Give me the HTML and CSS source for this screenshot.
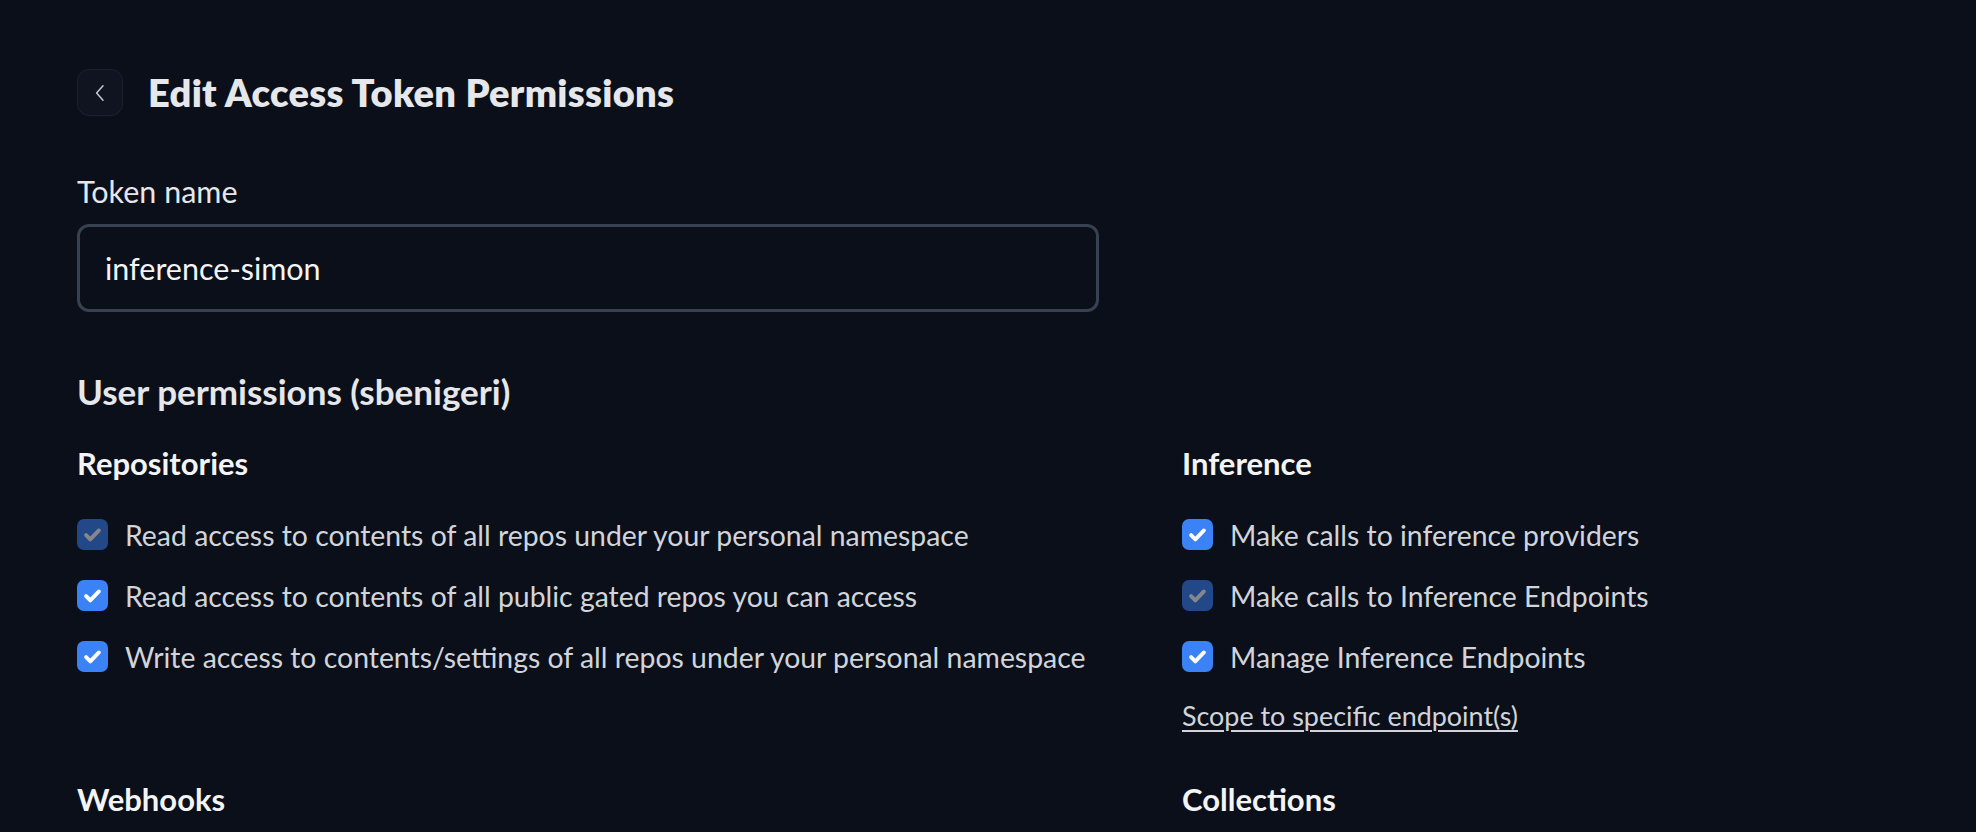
FILE: index.html
```html
<!DOCTYPE html>
<html lang="en">
<head>
<meta charset="utf-8">
<title>Edit Access Token Permissions</title>
<link rel="stylesheet" href="styles.css">
</head>
<body>
<main class="page">
  <header class="header">
    <a class="back" href="#" aria-label="Back">
      <svg width="12" height="18" viewBox="0 0 12 18" fill="none"><path d="M9 1.8L2.6 9l6.4 7.2" stroke="#c4c8d0" stroke-width="1.5" stroke-linecap="round" stroke-linejoin="round"/></svg>
    </a>
    <h1 class="title">Edit Access Token Permissions</h1>
  </header>

  <label class="label" for="tok">Token name</label>
  <div class="input">inference-simon</div>

  <h2 class="subtitle">User permissions (sbenigeri)</h2>

  <div class="grid">
    <section class="section">
      <h3 class="heading">Repositories</h3>
      <div class="list">
        <div class="row"><span class="box disabled"><svg viewBox="0 0 16 16"><path d="M4.2 8.4l2.5 2.5L11.8 5.6"/></svg></span><span class="text">Read access to contents of all repos under your personal namespace</span></div>
        <div class="row"><span class="box"><svg viewBox="0 0 16 16"><path d="M4.2 8.4l2.5 2.5L11.8 5.6"/></svg></span><span class="text">Read access to contents of all public gated repos you can access</span></div>
        <div class="row"><span class="box"><svg viewBox="0 0 16 16"><path d="M4.2 8.4l2.5 2.5L11.8 5.6"/></svg></span><span class="text">Write access to contents/settings of all repos under your personal namespace</span></div>
      </div>
    </section>
    <section class="section">
      <h3 class="heading">Inference</h3>
      <div class="list">
        <div class="row"><span class="box"><svg viewBox="0 0 16 16"><path d="M4.2 8.4l2.5 2.5L11.8 5.6"/></svg></span><span class="text">Make calls to inference providers</span></div>
        <div class="row"><span class="box disabled"><svg viewBox="0 0 16 16"><path d="M4.2 8.4l2.5 2.5L11.8 5.6"/></svg></span><span class="text">Make calls to Inference Endpoints</span></div>
        <div class="row"><span class="box"><svg viewBox="0 0 16 16"><path d="M4.2 8.4l2.5 2.5L11.8 5.6"/></svg></span><span class="text">Manage Inference Endpoints</span></div>
        <a class="link" href="#">Scope to specific endpoint(s)</a>
      </div>
    </section>
    <section class="section">
      <h3 class="heading">Webhooks</h3>
    </section>
    <section class="section">
      <h3 class="heading">Collections</h3>
    </section>
  </div>
</main>
</body>
</html>
```

FILE: styles.css
```css
html, body {
  margin: 0;
  padding: 0;
  background: #0b0f19;
  height: 100%;
  overflow: hidden;
}

body {
  font-family: Lato, "Noto Sans", sans-serif;
  color: #d1d5db;
}

.page {
  padding: 69px 77px 0 77px;
}

.header {
  display: flex;
  align-items: center;
  gap: 25px;
  height: 47px;
}

.back {
  width: 46px;
  height: 47px;
  box-sizing: border-box;
  border: 1.5px solid #1c2232;
  border-radius: 12px;
  background: #0f1420;
  display: flex;
  align-items: center;
  justify-content: center;
}

.title {
  margin: 0;
  font-size: 38px;
  font-weight: 800;
  letter-spacing: 0.3px;
  color: #e5e7eb;
  line-height: 47px;
}

.label {
  display: block;
  margin-top: 57px;
  font-size: 30.5px;
  line-height: 36px;
  color: #e5e7eb;
}

.input {
  margin-top: 15px;
  width: 1022px;
  height: 88px;
  box-sizing: border-box;
  border: 3px solid #374151;
  border-radius: 12px;
  padding-left: 25px;
  display: flex;
  align-items: center;
  font-size: 30.5px;
  color: #f3f4f6;
  background: #0b0f19;
}

.subtitle {
  margin: 57px 0 0 0;
  font-size: 35px;
  font-weight: 700;
  line-height: 44px;
  color: #e5e7eb;
}

.grid {
  margin-top: 30px;
  display: grid;
  grid-template-columns: 1105px 1fr;
  row-gap: 46px;
}

.heading {
  margin: 0;
  font-size: 31px;
  font-weight: 700;
  line-height: 40px;
  color: #f3f4f6;
}

.list {
  margin-top: 31.5px;
  display: flex;
  flex-direction: column;
  gap: 21px;
  align-items: flex-start;
}

.row {
  display: flex;
  align-items: center;
  gap: 17px;
  height: 40px;
}

.box {
  width: 31px;
  height: 31px;
  border-radius: 7px;
  background: #3b82f6;
  display: flex;
  align-items: center;
  justify-content: center;
  flex: none;
}

.box svg {
  width: 27px;
  height: 27px;
  fill: none;
  stroke: #ffffff;
  stroke-width: 2.3;
  stroke-linecap: round;
  stroke-linejoin: round;
}

.box.disabled {
  opacity: 0.5;
}

.text {
  font-size: 28.4px;
  line-height: 36px;
  color: #d1d5db;
  white-space: nowrap;
}

.link {
  margin-top: 1.5px;
  font-size: 26.9px;
  line-height: 34px;
  color: #d1d5db;
  text-decoration: underline;
  text-underline-offset: 4px;
  text-decoration-thickness: 1.5px;
}
```
